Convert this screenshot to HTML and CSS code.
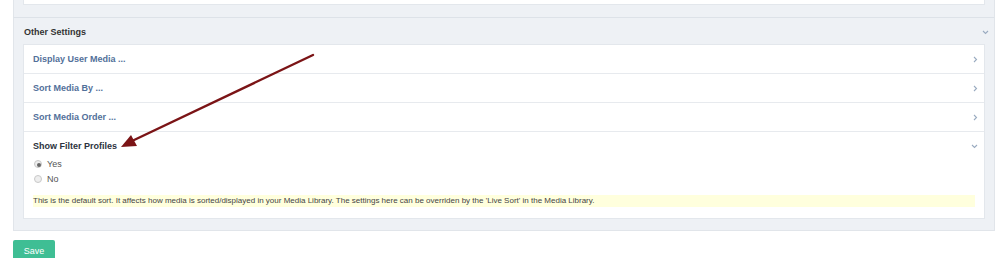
FILE: index.html
```html
<!DOCTYPE html>
<html lang="en">
<head>
    <meta charset="UTF-8">
    <title>Media Settings</title>
    <link rel="stylesheet" href="styles.css">
</head>
<body>
    <div class="panel panel-top">
        <div class="card card-top"></div>
    </div>

    <div class="panel">
        <div class="panel-head">
            <span class="panel-title">Other Settings</span>
            <svg class="chev" width="7" height="5" viewBox="0 0 7 5"><polyline points="1,1 3.5,3.5 6,1" fill="none" stroke="#9aabc0" stroke-width="1.1"/></svg>
        </div>

        <div class="card">
            <div class="row">
                <span class="row-title">Display User Media ...</span>
                <svg class="chev" width="5" height="7" viewBox="0 0 5 7"><polyline points="1,1 3.5,3.5 1,6" fill="none" stroke="#9aabc0" stroke-width="1.1"/></svg>
            </div>
            <div class="row">
                <span class="row-title">Sort Media By ...</span>
                <svg class="chev" width="5" height="7" viewBox="0 0 5 7"><polyline points="1,1 3.5,3.5 1,6" fill="none" stroke="#9aabc0" stroke-width="1.1"/></svg>
            </div>
            <div class="row">
                <span class="row-title">Sort Media Order ...</span>
                <svg class="chev" width="5" height="7" viewBox="0 0 5 7"><polyline points="1,1 3.5,3.5 1,6" fill="none" stroke="#9aabc0" stroke-width="1.1"/></svg>
            </div>
            <div class="row row-open">
                <div class="row-head">
                    <span class="row-title dark">Show Filter Profiles</span>
                    <svg class="chev" width="7" height="5" viewBox="0 0 7 5"><polyline points="1,1 3.5,3.5 6,1" fill="none" stroke="#9aabc0" stroke-width="1.1"/></svg>
                </div>
                <label class="opt first"><input type="radio" name="filter" checked> Yes</label>
                <label class="opt"><input type="radio" name="filter"> No</label>
                <p class="help">This is the default sort. It affects how media is sorted/displayed in your Media Library. The settings here can be overriden by the 'Live Sort' in the Media Library.</p>
            </div>
        </div>
    </div>

    <button class="save">Save</button>

    <svg class="arrow" width="1000" height="258" viewBox="0 0 1000 258">
        <line x1="313" y1="55" x2="132" y2="141" stroke="#7b1416" stroke-width="2.4" stroke-linecap="round"/>
        <polygon points="121,147 137,146 131,135" fill="#7b1416"/>
    </svg>
</body>
</html>
```

FILE: styles.css
```css
html, body {
    margin: 0;
    padding: 0;
    background: #fff;
    font-family: 'Liberation Sans', Arial, sans-serif;
    color: #333;
}

body {
    position: relative;
    height: 258px;
    overflow: hidden;
}

.panel {
    margin: 0 5px 0 13px;
    background: #eef1f5;
    border: 1px solid #e1e5ea;
    border-top: none;
    padding: 0 9px 11px 9px;
}

.panel-top {
    height: 17px;
    padding-bottom: 0;
    border-bottom: 1px solid #dde2e8;
}

.card {
    background: #fff;
    border: 1px solid #e3e7ec;
}

.card-top {
    height: 4px;
    border-top: none;
}

.panel-head {
    display: flex;
    justify-content: space-between;
    align-items: center;
    height: 24px;
    padding: 2px 0 0 1px;
}

.panel-title {
    font-size: 9px;
    font-weight: bold;
    color: #333;
}

.panel-head .chev {
    margin-right: -4px;
}

.row {
    display: flex;
    justify-content: space-between;
    align-items: center;
    height: 28px;
    padding: 0 6px 0 9px;
    border-bottom: 1px solid #e7eaee;
}

.row-title {
    font-size: 9px;
    font-weight: bold;
    color: #52709a;
}

.row-title.dark {
    color: #2c3340;
}

.row-open {
    display: block;
    height: auto;
    border-bottom: none;
    padding: 0 9px 11px 9px;
}

.row-head {
    display: flex;
    justify-content: space-between;
    align-items: center;
    height: 28px;
    margin-right: -3px;
}

.opt {
    display: flex;
    align-items: center;
    height: 15px;
    font-size: 9px;
    color: #555;
    margin-left: 1px;
}

.opt.first {
    margin-top: -4px;
}

.opt input {
    appearance: none;
    width: 8px;
    height: 8px;
    margin: 0 5px 0 0;
    border: 1px solid #c9c9c9;
    border-radius: 50%;
    background: #eee;
    position: relative;
}

.opt input:checked::after {
    content: "";
    position: absolute;
    left: 2px;
    top: 2px;
    width: 4px;
    height: 4px;
    border-radius: 50%;
    background: #666;
}

.help {
    margin: 9px 0 0 0;
    height: 12px;
    line-height: 12px;
    background: #ffffdd;
    font-size: 8px;
    color: #444;
}

.save {
    display: block;
    margin: 9px 0 0 13px;
    width: 42px;
    height: 22px;
    padding: 0;
    border: none;
    border-radius: 2px;
    background: #3fbe94;
    color: #fff;
    font-family: 'Liberation Sans', Arial, sans-serif;
    font-size: 9px;
}

.arrow {
    position: absolute;
    left: 0;
    top: 0;
    pointer-events: none;
}
```
